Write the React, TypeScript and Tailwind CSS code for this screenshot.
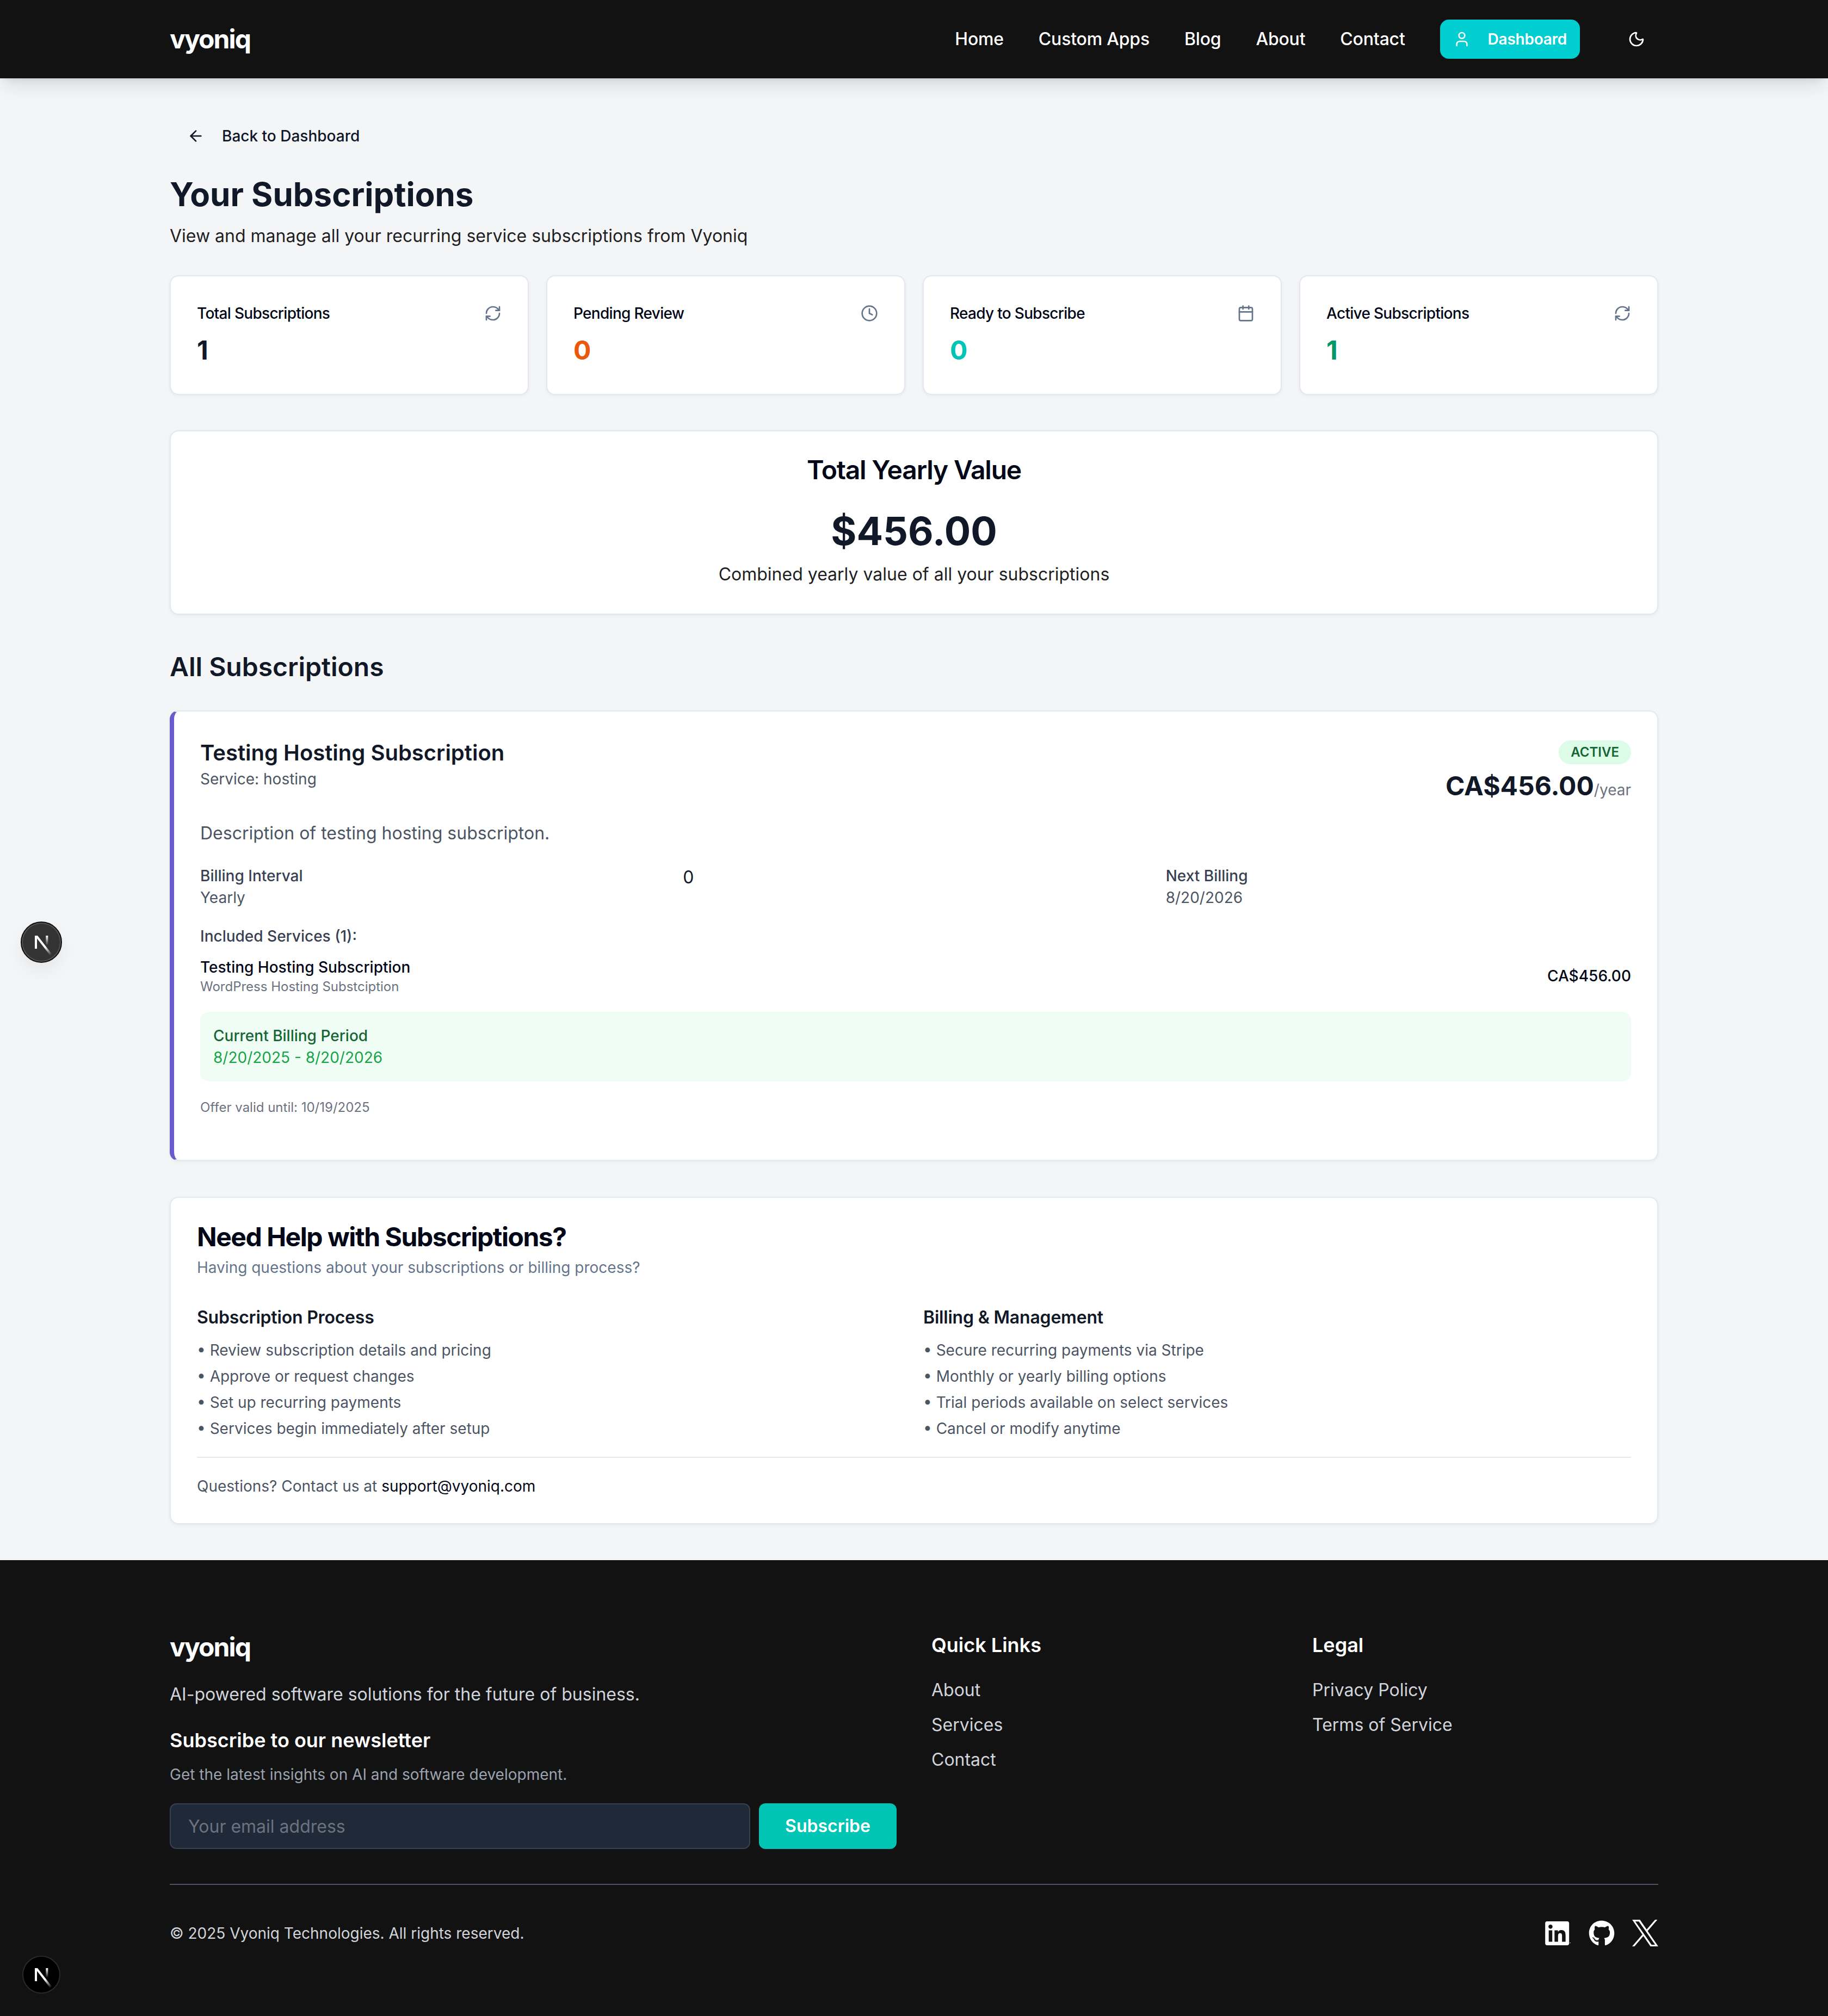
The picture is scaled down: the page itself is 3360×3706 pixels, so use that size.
import { ArrowLeft, Calendar, Clock, Moon, RefreshCw, User } from 'lucide-react'
import { FaGithub } from 'react-icons/fa'
import type { ReactNode } from 'react'

const navLinks = ['Home', 'Custom Apps', 'Blog', 'About', 'Contact']

const stats = [
  { label: 'Total Subscriptions', value: '1', color: 'text-[#111827]', icon: <RefreshCw size={32} /> },
  { label: 'Pending Review', value: '0', color: 'text-[#ea580c]', icon: <Clock size={32} /> },
  { label: 'Ready to Subscribe', value: '0', color: 'text-[#00c4b4]', icon: <Calendar size={32} /> },
  { label: 'Active Subscriptions', value: '1', color: 'text-[#059669]', icon: <RefreshCw size={32} /> },
]

const processItems = [
  'Review subscription details and pricing',
  'Approve or request changes',
  'Set up recurring payments',
  'Services begin immediately after setup',
]

const billingItems = [
  'Secure recurring payments via Stripe',
  'Monthly or yearly billing options',
  'Trial periods available on select services',
  'Cancel or modify anytime',
]

function NextMark({ id, className }: { id: string; className: string }) {
  return (
    <div className={className}>
      <svg width="60" height="60" viewBox="0 0 180 180" fill="none">
        <defs>
          <linearGradient id={`${id}-a`} x1="109" y1="116.5" x2="144.5" y2="160.5" gradientUnits="userSpaceOnUse">
            <stop stopColor="#fff" />
            <stop offset="1" stopColor="#fff" stopOpacity="0" />
          </linearGradient>
          <linearGradient id={`${id}-b`} x1="121" y1="54" x2="120.8" y2="106.9" gradientUnits="userSpaceOnUse">
            <stop stopColor="#fff" />
            <stop offset="1" stopColor="#fff" stopOpacity="0" />
          </linearGradient>
        </defs>
        <path
          d="M149.508 157.52L69.142 54H54V125.97H66.1136V69.3836L139.999 164.845C143.333 162.614 146.509 160.165 149.508 157.52Z"
          fill={`url(#${id}-a)`}
        />
        <rect x="115" y="54" width="12" height="72" fill={`url(#${id}-b)`} />
      </svg>
    </div>
  )
}

function BulletList({ title, items }: { title: string; items: string[] }) {
  return (
    <div>
      <h4 className="text-[32px] leading-[48px] font-semibold tracking-[-0.2px] text-[#111827]">{title}</h4>
      <ul className="mt-4 flex flex-col gap-2 text-[28px] leading-10 text-[#4b5563]">
        {items.map((item) => (
          <li key={item}>• {item}</li>
        ))}
      </ul>
    </div>
  )
}

function Card({ className, children }: { className: string; children: ReactNode }) {
  return (
    <div className={`rounded-2xl border-2 border-[#e2e8f0] bg-white shadow-[0_2px_6px_rgba(0,0,0,0.05)] ${className}`}>
      {children}
    </div>
  )
}

export default function App() {
  return (
    <div className="relative min-h-[3706px] overflow-hidden bg-[#f4f5f7] font-['Inter',sans-serif] text-[#111827]">
      <header className="relative z-10 h-[144px] bg-[#121212] shadow-[0_20px_30px_-6px_rgba(0,0,0,0.1),0_8px_12px_-8px_rgba(0,0,0,0.1)]">
        <div className="mx-auto flex h-full w-[2736px] items-center justify-between">
          <div className="text-[48px] font-bold tracking-[-1.9px] text-white">vyoniq</div>
          <nav className="flex items-center gap-16">
            {navLinks.map((link) => (
              <a key={link} className="text-[32px] font-medium tracking-[-0.2px] text-white">
                {link}
              </a>
            ))}
            <a className="flex h-[72px] items-center gap-8 rounded-2xl bg-[#00ced1] px-6 text-[28px] font-semibold tracking-[-0.25px] text-white">
              <User size={32} />
              Dashboard
            </a>
            <button className="flex h-[80px] w-[80px] items-center justify-center text-white">
              <Moon size={32} />
            </button>
          </nav>
        </div>
      </header>

      <main className="mx-auto w-[2736px] pt-[70px] pb-[66px]">
        <a className="flex h-[72px] items-center gap-8 px-8 text-[28px] font-medium text-[#0f172a]">
          <ArrowLeft size={32} />
          Back to Dashboard
        </a>
        <h1 className="mt-[35px] text-[60px] leading-[72px] font-bold text-[#111827]">Your Subscriptions</h1>
        <p className="mt-[17px] text-[32px] leading-[48px] text-[#1f1f23]">
          View and manage all your recurring service subscriptions from Vyoniq
        </p>

        <div className="mt-[48px] grid grid-cols-4 gap-8">
          {stats.map((stat) => (
            <Card key={stat.label} className="p-12">
              <div className="flex h-10 items-center justify-between">
                <span className="text-[28px] font-medium tracking-[-0.7px] text-[#020817]">{stat.label}</span>
                <span className="text-[#64748b]">{stat.icon}</span>
              </div>
              <div className={`mt-4 text-[48px] leading-[64px] font-bold ${stat.color}`}>{stat.value}</div>
            </Card>
          ))}
        </div>

        <Card className="mt-[65px] pt-[39px] pb-[48px] text-center">
          <h2 className="text-[48px] leading-[64px] font-semibold tracking-[-1.2px] text-[#020817]">Total Yearly Value</h2>
          <div className="mt-[40px] text-[72px] leading-[80px] font-bold text-[#111827]">$456.00</div>
          <p className="mt-4 text-[32px] leading-[48px] text-[#1f1f23]">Combined yearly value of all your subscriptions</p>
        </Card>

        <h2 className="mt-16 text-[48px] leading-[64px] font-semibold text-[#111827]">All Subscriptions</h2>

        <Card className="mt-[48px] h-[828px] border-l-8 border-l-[#6a5acd] px-12 pt-12">
          <div className="flex justify-between">
            <div>
              <h3 className="text-[40px] leading-[56px] font-semibold text-[#111827]">Testing Hosting Subscription</h3>
              <p className="text-[28px] leading-10 text-[#4b5563]">Service: hosting</p>
            </div>
            <div className="flex flex-col items-end">
              <span className="mt-[5px] flex h-[44px] items-center rounded-full bg-[#dcfce7] px-[22px] text-[24px] font-semibold text-[#166534]">
                ACTIVE
              </span>
              <div className="mt-[8px] flex items-baseline">
                <span className="text-[48px] leading-[64px] font-bold text-[#111827]">CA$456.00</span>
                <span className="text-[28px] text-[#6b7280]">/year</span>
              </div>
            </div>
          </div>

          <p className="mt-[31px] text-[32px] leading-[48px] text-[#4b5563]">Description of testing hosting subscripton.</p>

          <div className="mt-[34px] grid grid-cols-3 gap-8">
            <div>
              <div className="text-[28px] leading-10 font-medium text-[#374151]">Billing Interval</div>
              <div className="text-[28px] leading-10 text-[#4b5563]">Yearly</div>
            </div>
            <div className="mt-[3px] text-[32px] leading-10 text-[#111827]">0</div>
            <div>
              <div className="text-[28px] leading-10 font-medium text-[#374151]">Next Billing</div>
              <div className="text-[28px] leading-10 text-[#4b5563]">8/20/2026</div>
            </div>
          </div>

          <div className="mt-[31px] text-[28px] leading-10 font-medium text-[#374151]">Included Services (1):</div>

          <div className="mt-[17px] flex items-center justify-between">
            <div>
              <div className="text-[28px] leading-10 font-medium text-[#020817]">Testing Hosting Subscription</div>
              <div className="text-[24px] leading-8 text-[#6b7280]">WordPress Hosting Substciption</div>
            </div>
            <div className="text-[28px] font-medium text-[#020817]">CA$456.00</div>
          </div>

          <div className="mt-[30px] rounded-2xl bg-[#f0fdf4] p-6 text-[28px] leading-10">
            <div className="font-medium text-[#166534]">Current Billing Period</div>
            <div className="text-[#16a34a]">8/20/2025 - 8/20/2026</div>
          </div>

          <p className="mt-8 text-[24px] leading-8 text-[#6b7280]">Offer valid until: 10/19/2025</p>
        </Card>

        <Card className="mt-[66px] px-12 pt-10 pb-[48px]">
          <h2 className="text-[48px] leading-[64px] font-bold tracking-[-1.45px] text-[#020817]">Need Help with Subscriptions?</h2>
          <p className="mt-1 text-[28px] leading-10 text-[#64748b]">Having questions about your subscriptions or billing process?</p>
          <div className="mt-12 grid grid-cols-2 gap-[34px]">
            <BulletList title="Subscription Process" items={processItems} />
            <BulletList title="Billing & Management" items={billingItems} />
          </div>
          <div className="mt-8 border-t-2 border-[#e5e7eb] pt-8 text-[28px] leading-10 text-[#4b5563]">
            Questions? Contact us at <a className="text-[#020817]">support@vyoniq.com</a>
          </div>
        </Card>
      </main>

      <footer className="h-[840px] bg-[#121212] pt-[128px] text-white">
        <div className="mx-auto w-[2736px]">
          <div className="grid h-[467px] grid-cols-4 gap-16">
            <div className="col-span-2">
              <div className="text-[48px] leading-[64px] font-bold tracking-[-1.9px]">vyoniq</div>
              <p className="mt-[31px] text-[32px] leading-[48px] text-[#d1d5db]">AI-powered software solutions for the future of business.</p>
              <h3 className="mt-8 text-[36px] leading-[56px] font-semibold">Subscribe to our newsletter</h3>
              <p className="mt-[15px] text-[28px] leading-10 text-[#9ca3af]">Get the latest insights on AI and software development.</p>
              <div className="mt-[33px] flex gap-4">
                <input
                  placeholder="Your email address"
                  className="h-[84px] min-w-0 flex-1 rounded-xl border-2 border-[#374151] bg-[#1f2937] px-8 text-[32px] placeholder:text-[#6b7280]"
                />
                <button className="h-[84px] w-[253px] rounded-xl bg-[#00c4b4] text-[32px] font-semibold text-white">Subscribe</button>
              </div>
            </div>
            <div>
              <h3 className="text-[36px] leading-[56px] font-semibold">Quick Links</h3>
              <ul className="mt-[31px] flex flex-col gap-4 text-[32px] leading-[48px] text-[#d1d5db]">
                <li>About</li>
                <li>Services</li>
                <li>Contact</li>
              </ul>
            </div>
            <div>
              <h3 className="text-[36px] leading-[56px] font-semibold">Legal</h3>
              <ul className="mt-[31px] flex flex-col gap-4 text-[32px] leading-[48px] text-[#d1d5db]">
                <li>Privacy Policy</li>
                <li>Terms of Service</li>
              </ul>
            </div>
          </div>
          <div className="flex items-center justify-between border-t-2 border-[#4b5563] pt-[64px]">
            <p className="text-[28px] text-[#d1d5db]">© 2025 Vyoniq Technologies. All rights reserved.</p>
            <div className="flex items-center gap-8 text-white">
              <svg width="48" height="44" viewBox="0 0 26 24" fill="currentColor">
                <path d="M20.447 20.452h-3.554v-5.569c0-1.328-.027-3.037-1.852-3.037-1.853 0-2.136 1.445-2.136 2.939v5.667H9.351V9h3.414v1.561h.046c.477-.9 1.637-1.85 3.37-1.85 3.601 0 4.267 2.37 4.267 5.455v6.286zM5.337 7.433c-1.144 0-2.063-.926-2.063-2.065 0-1.138.92-2.063 2.063-2.063 1.14 0 2.064.925 2.064 2.063 0 1.139-.925 2.065-2.064 2.065zm1.782 13.019H3.555V9h3.564v11.452zM22.225 0H1.771C.792 0 0 .774 0 1.729v20.542C0 23.227.792 24 1.771 24h20.451C23.2 24 24 23.227 24 22.271V1.729C24 .774 23.2 0 22.222 0h.003z" />
                <circle cx="25" cy="21.5" r="0.4" />
              </svg>
              <FaGithub size={48} />
              <svg width="48" height="49" viewBox="0 0 1200 1227" fill="currentColor">
                <path d="M714.163 519.284L1160.89 0H1055.03L667.137 450.887L357.328 0H0L468.492 681.821L0 1226.37H105.866L515.491 750.218L842.672 1226.37H1200L714.137 519.284H714.163ZM569.165 687.828L521.697 619.934L144.011 79.6944H306.615L611.412 515.685L658.88 583.579L1055.08 1150.3H892.476L569.165 687.854V687.828Z" />
              </svg>
            </div>
          </div>
        </div>
      </footer>

      {/* dev indicators sit over the page */}
      <div className="absolute top-[1660px] left-0 h-[144px] w-[156px] overflow-hidden">
        <NextMark
          id="n1"
          className="absolute top-[34px] left-[38px] flex h-[76px] w-[76px] items-center justify-center rounded-full border-2 border-[#111] bg-[#333] shadow-[inset_0_0_0_2px_#555,0_16px_32px_rgba(0,0,0,0.06)]"
        />
      </div>
      <NextMark
        id="n2"
        className="absolute top-[3595px] left-[41px] flex h-[70px] w-[70px] items-center justify-center rounded-full border-2 border-[#2a2a2a] bg-black"
      />
    </div>
  )
}
